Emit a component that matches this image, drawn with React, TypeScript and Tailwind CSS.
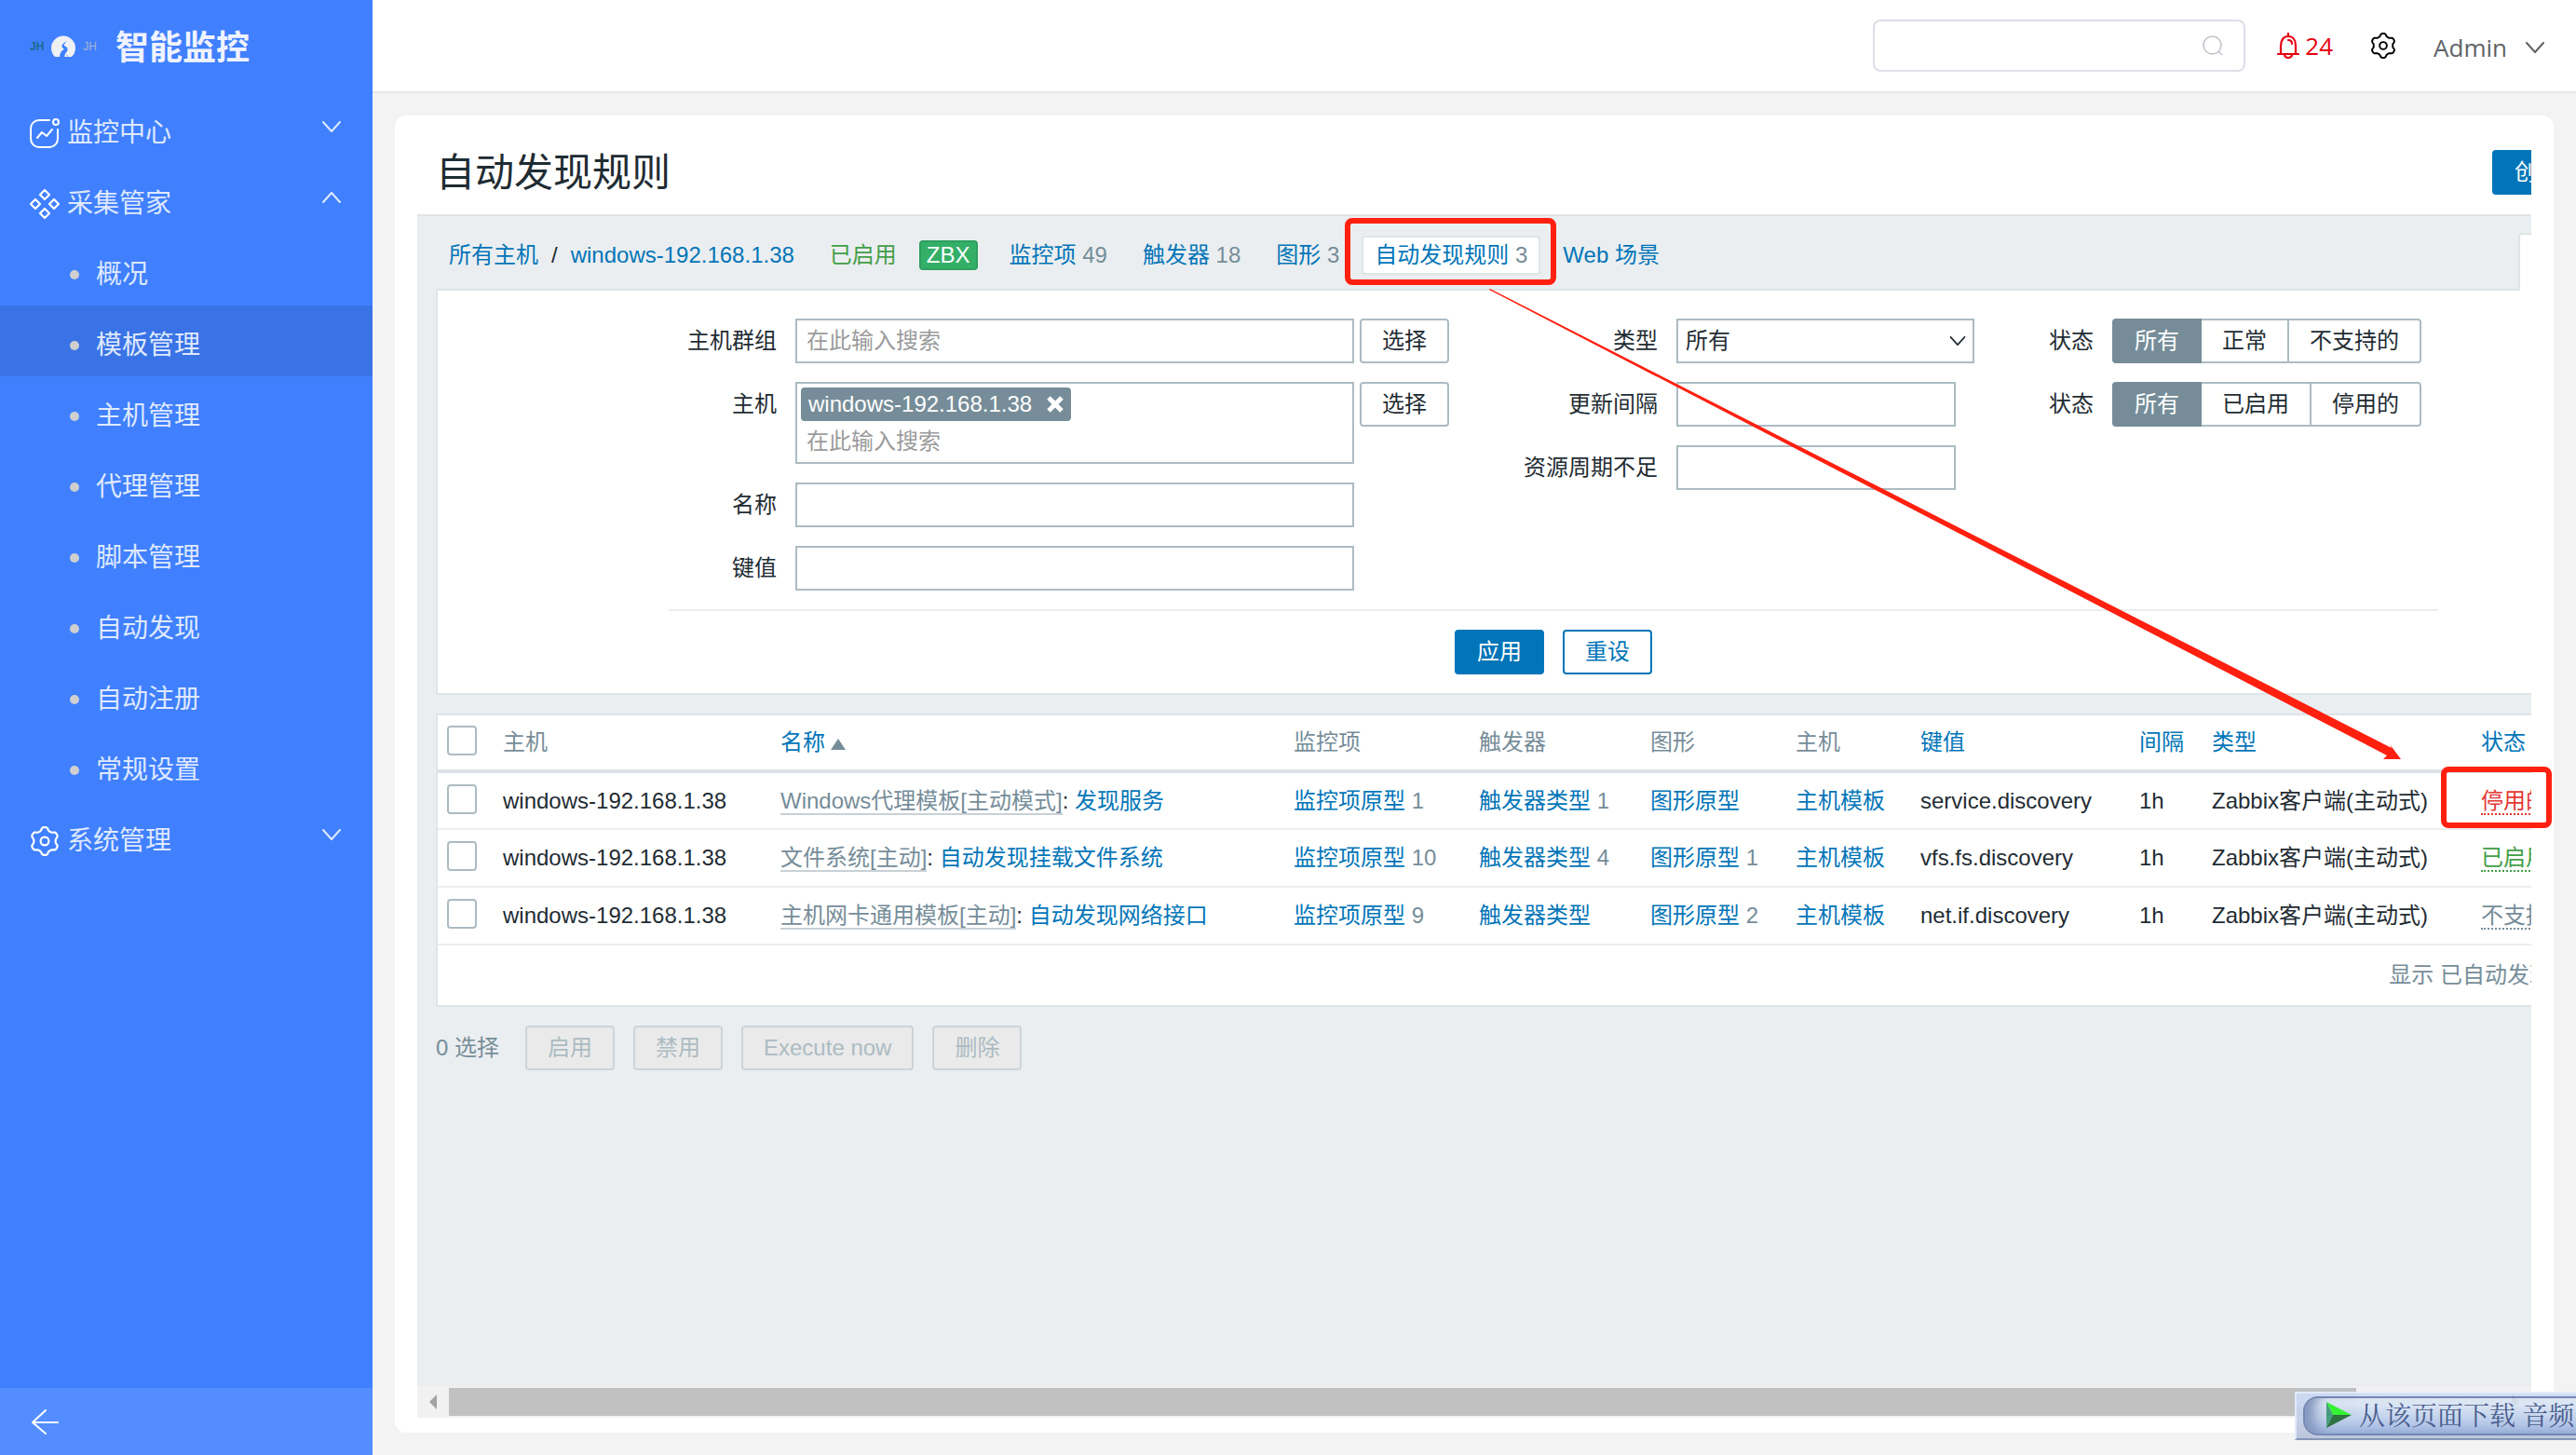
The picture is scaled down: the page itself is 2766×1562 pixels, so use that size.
import { useState } from "react";
import type { ReactNode } from "react";

type DiscoveryRule = {
  template: string;
  name: string;
  items: number;
  triggers?: number;
  graphs?: number;
  itemKey: string;
  status: string;
  statusClass: string;
};

const HOST = "windows-192.168.1.38";

const subMenu = [
  "概况",
  "模板管理",
  "主机管理",
  "代理管理",
  "脚本管理",
  "自动发现",
  "自动注册",
  "常规设置",
];

const rules: DiscoveryRule[] = [
  {
    template: "Windows代理模板[主动模式]",
    name: "发现服务",
    items: 1,
    triggers: 1,
    itemKey: "service.discovery",
    status: "停用的",
    statusClass: "text-[#e33734] border-[#e33734]",
  },
  {
    template: "文件系统[主动]",
    name: "自动发现挂载文件系统",
    items: 10,
    triggers: 4,
    graphs: 1,
    itemKey: "vfs.fs.discovery",
    status: "已启用",
    statusClass: "text-[#429e47] border-[#429e47]",
  },
  {
    template: "主机网卡通用模板[主动]",
    name: "自动发现网络接口",
    items: 9,
    graphs: 2,
    itemKey: "net.if.discovery",
    status: "不支持的",
    statusClass: "text-[#768d99] border-[#768d99]",
  },
];

// Outline of the six-lobed gear, in a 32x32 box
const gearPath =
  Array.from({ length: 96 }, (_, i) => {
    const a = (i / 96) * Math.PI * 2;
    const r = 13.3 + 1.7 * Math.tanh(1.8 * Math.cos(6 * (a - Math.PI / 2)));
    const x = (16 + r * Math.cos(a)).toFixed(2);
    const y = (16 - r * Math.sin(a)).toFixed(2);
    return `${i === 0 ? "M" : "L"}${x} ${y}`;
  }).join("") + "Z";

function GearIcon({ className }: { className: string }) {
  return (
    <svg
      viewBox="0 0 32 32"
      className={className}
      fill="none"
      stroke="currentColor"
      strokeWidth="2.2"
      strokeLinejoin="round"
    >
      <path d={gearPath} />
      <circle cx="16" cy="16" r="4.4" />
    </svg>
  );
}

function TrendIcon() {
  return (
    <svg
      viewBox="0 0 32 32"
      className="size-8"
      fill="none"
      stroke="currentColor"
      strokeWidth="2"
      strokeLinecap="round"
      strokeLinejoin="round"
    >
      <path d="M21 2H10a9 9 0 0 0-9 9v11a9 9 0 0 0 9 9h11a9 9 0 0 0 9-9V12" />
      <path d="M8 21l5-6 5 4 6-7" />
      <circle cx="28" cy="4" r="3" />
    </svg>
  );
}

function DiamondsIcon() {
  return (
    <svg
      viewBox="0 0 32 32"
      className="size-8"
      fill="none"
      stroke="currentColor"
      strokeWidth="2.2"
      strokeLinejoin="round"
    >
      <path d="M16 1l5 5-5 5-5-5zM6 11l5 5-5 5-5-5zM26 11l5 5-5 5-5-5zM16 21l5 5-5 5-5-5z" />
    </svg>
  );
}

function Chevron({ className, up }: { className: string; up?: boolean }) {
  return (
    <svg
      viewBox="0 0 20 12"
      className={className}
      fill="none"
      stroke="currentColor"
      strokeWidth="2"
      strokeLinecap="round"
      strokeLinejoin="round"
    >
      <path d={up ? "M1 11l9-10 9 10" : "M1 1l9 10 9-10"} />
    </svg>
  );
}

function MenuGroup({
  icon,
  label,
  open,
  onToggle,
}: {
  icon: ReactNode;
  label: string;
  open?: boolean;
  onToggle?: () => void;
}) {
  return (
    <button
      type="button"
      onClick={onToggle}
      className="flex h-[76px] w-full items-center justify-between pl-8 pr-[34px]"
    >
      <span className="flex items-center gap-2 pt-[10px]">
        <span className="text-white">{icon}</span>
        {label}
      </span>
      <Chevron className="mb-1 h-3 w-5" up={open} />
    </button>
  );
}

function Sidebar() {
  const [active, setActive] = useState("模板管理");
  const [open, setOpen] = useState(true);

  return (
    <aside className="flex w-[400px] shrink-0 flex-col bg-[#4080ff] text-[28px] leading-10 text-[#dfe9ff]">
      <div className="flex h-[100px] items-center pl-8">
        <div className="flex w-[92px] items-center gap-2 text-xs">
          <span className="font-bold text-[#1b6a8f]">JH</span>
          <svg viewBox="0 0 26 24" className="h-6 w-[26px]">
            <path
              d="M4 23A13 13 0 1 1 22 23L18 23Q18 21 16 21Q15 21 15 23L9 23Q10 17 14 15Q11 13 11 11Q12 9 17 6Q12 11 16 13Q19 16 16 18Q14 20 16 21L18 23Z"
              fill="#eef0f2"
            />
            <path
              d="M9 24q0-7 5-9-4-3-2-5 1-2 5-4-4 4-3 5 5 2 3 6-3 3-3 7z"
              fill="#4080ff"
            />
          </svg>
          <span className="text-[#a9b4cc]">JH</span>
        </div>
        <span className="pt-1 text-4xl font-bold text-[#f0f3ff]">
          智能监控
        </span>
      </div>
      <nav className="flex-1">
        <MenuGroup icon={<TrendIcon />} label="监控中心" />
        <MenuGroup
          icon={<DiamondsIcon />}
          label="采集管家"
          open={open}
          onToggle={() => setOpen(!open)}
        />
        {open && (
          <ul>
            {subMenu.map((item) => (
              <li key={item}>
                <a
                  href="#"
                  onClick={() => setActive(item)}
                  className={
                    item === active
                      ? "flex h-[76px] items-center gap-[18px] bg-[#3a73e6] pl-[75px] pt-[10px]"
                      : "flex h-[76px] items-center gap-[18px] pl-[75px] pt-[10px]"
                  }
                >
                  <span className="size-[10px] rounded-full bg-[#cfcfcf]" />
                  {item}
                </a>
              </li>
            ))}
          </ul>
        )}
        <MenuGroup icon={<GearIcon className="size-8" />} label="系统管理" />
      </nav>
      <button
        type="button"
        aria-label="收起菜单"
        className="flex h-[72px] items-center bg-[#538dff] pl-8 text-white"
      >
        <svg
          viewBox="0 0 32 32"
          className="size-8"
          fill="none"
          stroke="currentColor"
          strokeWidth="2"
          strokeLinecap="round"
          strokeLinejoin="round"
        >
          <path d="M30 17H3M17 4L3 17l14 12" />
        </svg>
      </button>
    </aside>
  );
}

function TopBar() {
  return (
    <header className="flex h-[100px] items-center justify-end border-b-2 border-[#e6e6e6] bg-white pr-[34px] font-['Open_Sans','Noto_Sans_CJK_SC',sans-serif] text-[26px]">
      <div className="flex h-14 w-[400px] items-center rounded-lg border-2 border-[#dcdfe6] px-[22px]">
        <input
          type="search"
          aria-label="搜索"
          className="min-w-0 flex-1 outline-none"
        />
        <svg
          viewBox="0 0 22 22"
          className="size-[22px] text-[#c0c4cc]"
          fill="none"
          stroke="currentColor"
          strokeWidth="1.6"
        >
          <circle cx="10.5" cy="10.5" r="9.5" />
          <path d="M17 17l4 4" />
        </svg>
      </div>
      <button
        type="button"
        className="ml-[34px] flex items-center gap-[6px] text-[#e60012]"
      >
        <svg
          viewBox="0 0 24 28"
          className="h-7 w-6"
          fill="none"
          stroke="currentColor"
          strokeWidth="2.2"
          strokeLinecap="round"
        >
          <path d="M12 1v3M4 22V14C4 8 7 4 12 4s8 4 8 10v8M1 23h22M8 24c1 4 7 4 8 0M12 8q4 0 4 4" />
        </svg>
        24
      </button>
      <button type="button" aria-label="设置" className="ml-10 text-black">
        <GearIcon className="size-7" />
      </button>
      <button
        type="button"
        className="ml-10 flex items-center gap-5 pt-1 text-[#606266]"
      >
        Admin
        <Chevron className="h-3 w-5" />
      </button>
    </header>
  );
}

function HostNav() {
  return (
    <nav className="flex items-center pl-[14px] pt-[3px] text-[#768d99]">
      <a href="#" className="text-[#0275b8]">
        所有主机
      </a>
      <span className="px-[14px] text-[#1f2c33]">/</span>
      <a href="#" className="text-[#0275b8]">
        {HOST}
      </a>
      <span className="ml-[38px] text-[#429e47]">已启用</span>
      <span className="ml-6 rounded border-2 border-[#2f9f5e] bg-[#34af67] px-[6px] leading-7 text-white">
        ZBX
      </span>
      <div className="ml-5 flex gap-[10px]">
        <HostTab label="监控项" count={49} />
        <HostTab label="触发器" count={18} />
        <HostTab label="图形" count={3} />
        <HostTab label="自动发现规则" count={3} selected />
        <HostTab label="Web 场景" />
      </div>
    </nav>
  );
}

function HostTab({
  label,
  count,
  selected,
}: {
  label: string;
  count?: number;
  selected?: boolean;
}) {
  return (
    <span
      className={
        selected
          ? "rounded border-2 border-[#dfe4e7] bg-white px-3 leading-[38px]"
          : "border-2 border-transparent px-3 leading-[38px]"
      }
    >
      <a href="#" className="text-[#0275b8]">
        {label}
      </a>
      {count !== undefined && ` ${count}`}
    </span>
  );
}

function Field({
  label,
  id,
  labelWidth,
  children,
}: {
  label: string;
  id: string;
  labelWidth: string;
  children: ReactNode;
}) {
  return (
    <div className="flex items-start gap-5">
      <label htmlFor={id} className={`${labelWidth} text-right leading-[48px]`}>
        {label}
      </label>
      {children}
    </div>
  );
}

function SelectButton() {
  return (
    <button
      type="button"
      className="ml-[-14px] h-12 w-24 rounded border-2 border-[#acbbc2] bg-white"
    >
      选择
    </button>
  );
}

function StatusRadio({ name, options }: { name: string; options: string[] }) {
  return (
    <div
      role="radiogroup"
      aria-labelledby={`${name}-label`}
      className="flex items-center gap-5 whitespace-nowrap"
    >
      <span id={`${name}-label`}>状态</span>
      <div className="flex h-12">
        {options.map((option, i) => (
          <label
            key={option}
            className="border-y-2 border-r-2 border-[#acbbc2] px-[22px] leading-[44px] first:rounded-l first:border-l-2 last:rounded-r has-checked:border-[#768d99] has-checked:bg-[#768d99] has-checked:text-white"
          >
            <input
              type="radio"
              name={name}
              defaultChecked={i === 0}
              className="sr-only"
            />
            {option}
          </label>
        ))}
      </div>
    </div>
  );
}

function FilterForm() {
  return (
    <form className="border-2 border-[#dfe4e7] bg-white pb-5 pt-[30px]">
      <div className="mx-auto w-[1900px]">
        <div className="flex gap-20 border-b-2 border-[#ebeef0] pb-5 pl-5">
          <div className="flex flex-col gap-5">
            <Field label="主机群组" id="groups" labelWidth="w-24">
              <input
                id="groups"
                placeholder="在此输入搜索"
                className="h-12 w-[600px] border-2 border-[#acbbc2] px-[10px] placeholder:text-[#9b9b9b]"
              />
              <SelectButton />
            </Field>
            <Field label="主机" id="hosts" labelWidth="w-24">
              <div className="flex h-[88px] w-[600px] flex-col items-start border-2 border-[#acbbc2] px-1 pt-1">
                <span className="flex h-9 items-center gap-4 rounded bg-[#768d99] px-2 text-white">
                  {HOST}
                  <button type="button" aria-label="移除">
                    <svg
                      viewBox="0 0 18 18"
                      className="size-[18px]"
                      stroke="currentColor"
                      strokeWidth="5"
                    >
                      <path d="M2 2l14 14M16 2L2 16" />
                    </svg>
                  </button>
                </span>
                <input
                  id="hosts"
                  placeholder="在此输入搜索"
                  className="h-11 w-full px-[6px] placeholder:text-[#9b9b9b]"
                />
              </div>
              <SelectButton />
            </Field>
            <Field label="名称" id="name" labelWidth="w-24">
              <input
                id="name"
                className="h-12 w-[600px] border-2 border-[#acbbc2] px-2"
              />
            </Field>
            <Field label="键值" id="key" labelWidth="w-24">
              <input
                id="key"
                className="h-12 w-[600px] border-2 border-[#acbbc2] px-2"
              />
            </Field>
          </div>
          <div className="flex flex-col gap-5">
            <Field label="类型" id="type" labelWidth="w-36">
              <div className="relative">
                <select
                  id="type"
                  className="h-12 w-80 appearance-none border-2 border-[#acbbc2] bg-white px-2"
                >
                  <option>所有</option>
                </select>
                <Chevron className="pointer-events-none absolute right-2 top-[19px] h-[10px] w-5" />
              </div>
            </Field>
            <Field label="更新间隔" id="interval" labelWidth="w-36">
              <input
                id="interval"
                className="h-12 w-[300px] border-2 border-[#acbbc2] px-2"
              />
            </Field>
            <Field label="资源周期不足" id="lifetime" labelWidth="w-36">
              <input
                id="lifetime"
                className="h-12 w-[300px] border-2 border-[#acbbc2] px-2"
              />
            </Field>
          </div>
          <div className="flex flex-col gap-5">
            <StatusRadio name="state" options={["所有", "正常", "不支持的"]} />
            <StatusRadio
              name="status"
              options={["所有", "已启用", "停用的"]}
            />
          </div>
        </div>
        <div className="flex justify-center gap-5 pt-5">
          <button
            type="button"
            className="h-12 w-24 rounded border-2 border-[#0275b8] bg-[#0275b8] text-white"
          >
            应用
          </button>
          <button
            type="reset"
            className="h-12 w-24 rounded border-2 border-[#0275b8] bg-white text-[#0275b8]"
          >
            重设
          </button>
        </div>
      </div>
    </form>
  );
}

function CheckBox({ label }: { label: string }) {
  return (
    <input
      type="checkbox"
      aria-label={label}
      className="mb-1 block size-8 appearance-none rounded border-2 border-[#acbbc2] bg-white checked:bg-[#768d99]"
    />
  );
}

function CountLink({ label, count }: { label: string; count?: number }) {
  return (
    <td className="px-[10px] text-[#768d99]">
      <a href="#" className="text-[#0275b8]">
        {label}
      </a>
      {count !== undefined && ` ${count}`}
    </td>
  );
}

function SortHeader({ label, sorted }: { label: string; sorted?: boolean }) {
  return (
    <th className="px-[10px] font-normal">
      <a href="#" className="flex items-center gap-[6px] text-[#0275b8]">
        {label}
        {sorted && (
          <svg viewBox="0 0 16 12" className="mt-1 h-3 w-4 fill-[#768d99]">
            <path d="M8 0l8 12H0z" />
          </svg>
        )}
      </a>
    </th>
  );
}

function RulesTable() {
  return (
    <div className="mt-5 border-2 border-[#dfe4e7] bg-white">
      <table className="w-full table-fixed border-collapse text-left">
        <colgroup>
          <col className="w-[60px]" />
          <col className="w-[298px]" />
          <col className="w-[551px]" />
          <col className="w-[199px]" />
          <col className="w-[184px]" />
          <col className="w-[156px]" />
          <col className="w-[134px]" />
          <col className="w-[235px]" />
          <col className="w-[78px]" />
          <col className="w-[289px]" />
          <col />
        </colgroup>
        <thead>
          <tr className="h-[60px] border-b-4 border-[#dce2e5] text-[#768d99]">
            <th className="px-[10px]">
              <CheckBox label="全选" />
            </th>
            <th className="px-[10px] font-normal">主机</th>
            <SortHeader label="名称" sorted />
            <th className="px-[10px] font-normal">监控项</th>
            <th className="px-[10px] font-normal">触发器</th>
            <th className="px-[10px] font-normal">图形</th>
            <th className="px-[10px] font-normal">主机</th>
            <SortHeader label="键值" />
            <SortHeader label="间隔" />
            <SortHeader label="类型" />
            <SortHeader label="状态" />
          </tr>
        </thead>
        <tbody>
          {rules.map((rule) => (
            <tr
              key={rule.itemKey}
              className="h-[62px] border-b-2 border-[#ebeef0]"
            >
              <td className="px-[10px]">
                <CheckBox label={rule.name} />
              </td>
              <td className="px-[10px]">{HOST}</td>
              <td className="px-[10px]">
                <a
                  href="#"
                  className="border-b-2 border-[#c8d1d6] text-[#768d99]"
                >
                  {rule.template}
                </a>
                :{" "}
                <a href="#" className="text-[#0275b8]">
                  {rule.name}
                </a>
              </td>
              <CountLink label="监控项原型" count={rule.items} />
              <CountLink label="触发器类型" count={rule.triggers} />
              <CountLink label="图形原型" count={rule.graphs} />
              <CountLink label="主机模板" />
              <td className="px-[10px]">{rule.itemKey}</td>
              <td className="px-[10px]">1h</td>
              <td className="whitespace-nowrap px-[10px]">
                Zabbix客户端(主动式)
              </td>
              <td className="px-[10px]">
                <a
                  href="#"
                  className={`border-b-2 border-dotted ${rule.statusClass}`}
                >
                  {rule.status}
                </a>
              </td>
            </tr>
          ))}
        </tbody>
      </table>
      <p className="px-[14px] text-right leading-[64px] text-[#768d99]">
        显示 已自动发现的 3中的 3
      </p>
    </div>
  );
}

function BulkActions() {
  return (
    <div className="flex items-center gap-5 pt-5 text-[#768d99]">
      <span className="pr-2">0 选择</span>
      {["启用", "禁用", "Execute now", "删除"].map((action) => (
        <button
          key={action}
          type="button"
          disabled
          className="h-12 rounded border-2 border-[#ccd5d9] bg-[#eaeaea] px-[22px] text-[#acbbc2]"
        >
          {action}
        </button>
      ))}
    </div>
  );
}

function ScrollBar() {
  return (
    <div className="flex h-[34px] items-center bg-[#f1f1f1]">
      <svg viewBox="0 0 34 34" className="size-[34px] fill-[#a3a3a3]">
        <path d="M21 9v16l-8-8z" />
      </svg>
      <div className="flex-1">
        <div className="h-[30px] w-[93%] bg-[#c1c1c1]" />
      </div>
      <svg viewBox="0 0 34 34" className="size-[34px] fill-[#505050]">
        <path d="M13 9v16l8-8z" />
      </svg>
    </div>
  );
}

// Red marks drawn over the page: tab -> status column
function Annotations() {
  return (
    <div className="pointer-events-none absolute inset-0">
      <div className="absolute left-[1020px] top-[110px] h-[72px] w-[227px] rounded-lg border-6 border-[#ff2010]" />
      <div className="absolute left-[2197px] top-[699px] h-[66px] w-[119px] rounded-lg border-6 border-[#ff2010]" />
      <svg
        viewBox="0 0 980 506"
        className="absolute left-[1175px] top-[186px] h-[506px] w-[980px] fill-[#ff2010]"
      >
        <path d="M0 1L1 0L969 493L967 489L979 505L960 505L964 501Z" />
      </svg>
    </div>
  );
}

function DownloadBar() {
  return (
    <div className="fixed bottom-4 right-0 w-[302px] overflow-hidden border-y-2 border-l-2 border-t-[#e3ebfb] border-l-[#e3ebfb] border-b-[#8091b5] bg-linear-to-b from-[#cfdcf7] to-[#b9c5dc] py-[3px] pl-[7px] opacity-95">
      <button
        type="button"
        className="flex h-[42px] w-[310px] items-center gap-2 whitespace-nowrap rounded-l-2xl border-2 border-[#6f82b0] bg-linear-to-b from-[#e6eef8] via-[#c3d3ec] to-[#9db4e0] pb-[2px] pl-[22px] text-[28px] text-[#3f5488] shadow-[inset_14px_-2px_12px_-4px_#7f93bd]"
      >
        <svg viewBox="0 0 28 28" className="size-7 shrink-0">
          <path d="M1 0L28 14H8z" fill="#2df52d" />
          <path d="M1 0v28l7-14z" fill="#3f9a78" />
          <path d="M1 28L28 14H8z" fill="#256b38" />
        </svg>
        <span className="font-['Noto_Serif_CJK_SC','Noto_Sans_CJK_SC',serif]">
          从该页面下载 音频
        </span>
      </button>
    </div>
  );
}

export default function App() {
  return (
    <div className="flex min-h-screen bg-[#f3f3f3] font-['Liberation_Sans','Noto_Sans_CJK_SC',sans-serif] text-2xl text-[#1f2c33]">
      <Sidebar />
      <div className="flex min-w-0 flex-1 flex-col">
        <TopBar />
        <main className="relative m-6 flex flex-1 flex-col rounded-xl bg-white px-6 pb-4">
          <div className="flex flex-1 flex-col overflow-hidden">
            <div className="flex min-w-[2440px] flex-1 flex-col">
              <div className="flex items-center justify-between px-5 pb-[21px] pt-[37px]">
                <h1 className="pt-[2px] text-[42px] leading-[46px]">
                  自动发现规则
                </h1>
                <button
                  type="button"
                  className="h-12 w-48 whitespace-nowrap rounded bg-[#0275b8] px-6 text-left text-white"
                >
                  创建发现规则
                </button>
              </div>
              <div className="flex-1 border-t-2 border-[#dfe4e7] bg-[#ebeef0] px-5 pb-5">
                <div className="flex h-[78px] items-start justify-between pt-[18px]">
                  <HostNav />
                  <button
                    type="button"
                    className="relative h-[62px] w-[164px] rounded-t border-x-2 border-t-2 border-[#dfe4e7] bg-white text-[#0275b8]"
                  >
                    过滤器
                  </button>
                </div>
                <FilterForm />
                <RulesTable />
                <BulkActions />
              </div>
            </div>
            <ScrollBar />
          </div>
          <Annotations />
        </main>
      </div>
      <DownloadBar />
    </div>
  );
}
